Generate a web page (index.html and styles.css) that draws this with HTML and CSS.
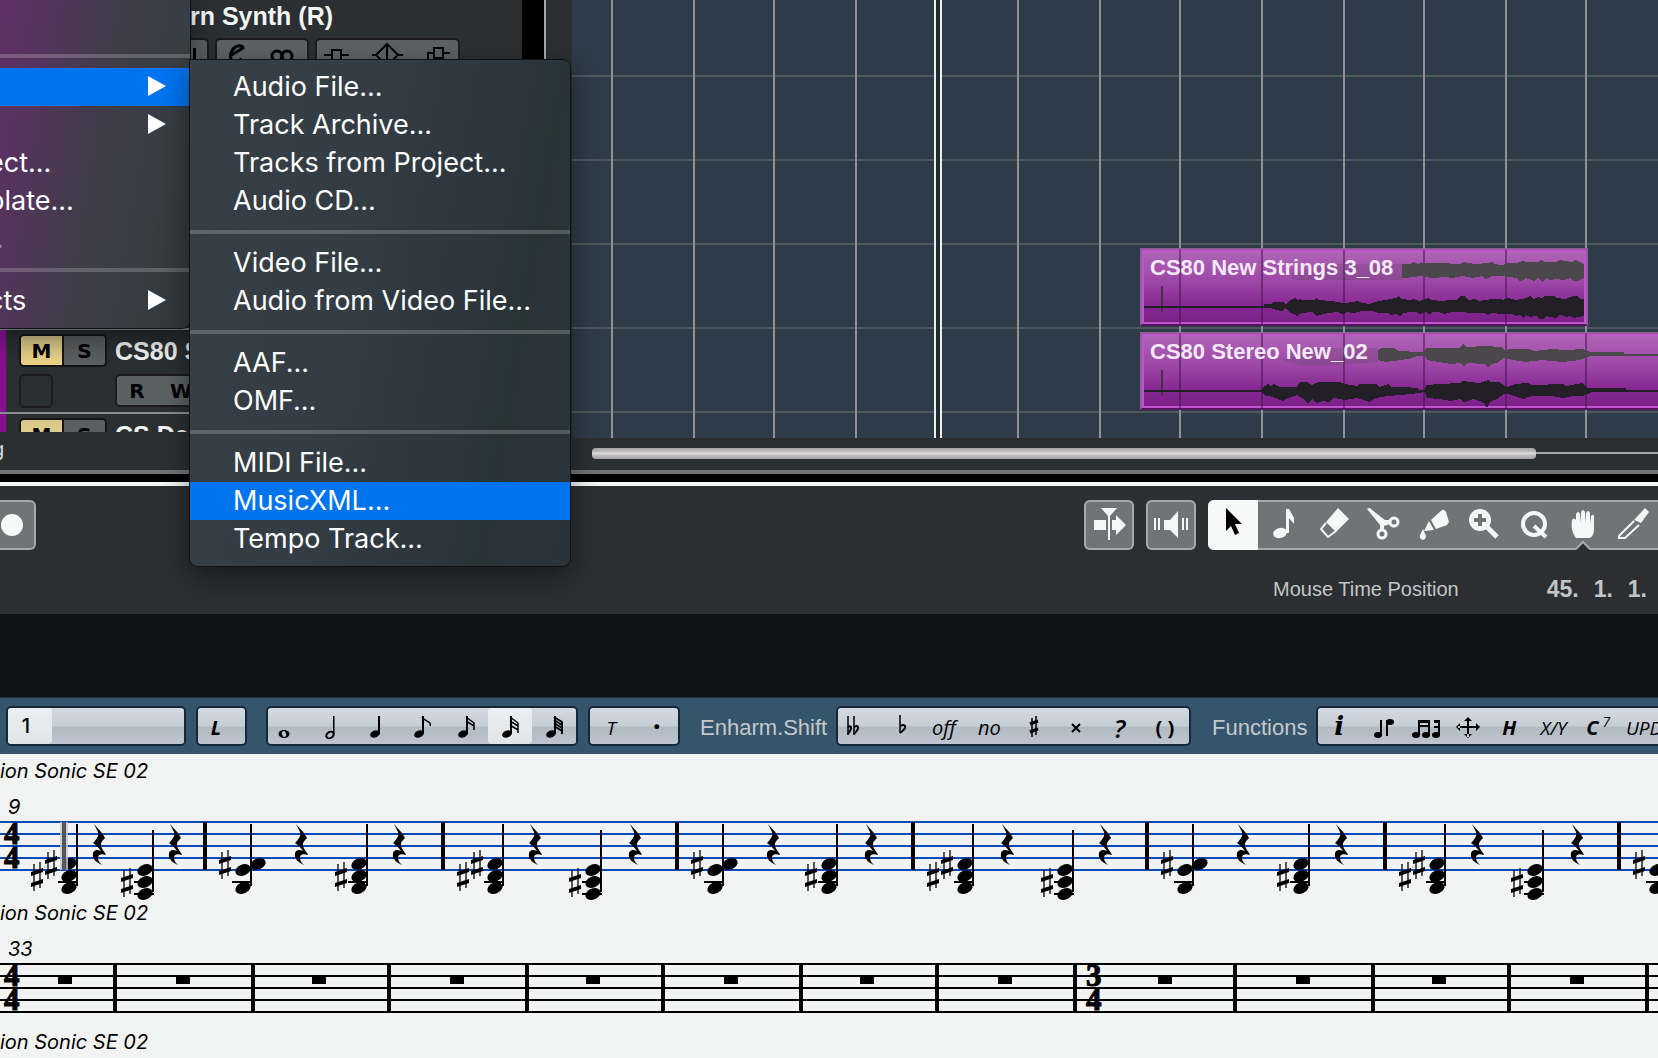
FILE: index.html
```html
<!DOCTYPE html>
<html lang="en">
<head>
  <meta charset="UTF-8" />
  <meta name="viewport" content="width=device-width, initial-scale=1.0" />
  <title>Project</title>
  <link rel="stylesheet" href="styles.css">
</head>
<body>

  <!-- shared symbols -->
  <svg class="defs" width="0" height="0" aria-hidden="true">
    <g id="n"><ellipse rx="8" ry="5.5" transform="rotate(-24)" /></g>
    <g id="sharp">
      <path d="M-3-12v27M3-14v26" stroke="#000" stroke-width="1.3" />
      <path d="M-6-4L6-8v4L-6 0zM-6 7L6 3v4L-6 11z" />
    </g>
    <g id="rest">
      <path d="M-4-20C1-14 4-12 7-6C2-1 1 1 7 9L8 11C2 9 0 11 0 14C0 17 2 19 4 21C-3 18-6 14-5 9C-4 6-1 5 3 7C0 3-2 1-5-1C0-6 1-9 0-12z" />
    </g>
    <g id="chord-d">
      <use href="#n" x="-7" y="43" /><use href="#n" x="-7" y="55" /><use href="#n" x="-7" y="67" />
      <path d="M0 3h2v62h-2zM-18 60h20v2h-20z" />
      <use href="#sharp" x="-25" y="55" />
    </g>
    <g id="chord-two">
      <use href="#n" x="-7" y="43" /><use href="#n" x="-7" y="55" /><use href="#n" x="-7" y="67" />
      <path d="M0 3h2v62h-2zM-18 60h20v2h-20z" />
      <use href="#sharp" x="-39" y="55" />
      <use href="#sharp" x="-25" y="43" />
    </g>
    <g id="chord-b">
      <use href="#n" x="-7" y="49" /><use href="#n" x="-7" y="61" /><use href="#n" x="-7" y="73" />
      <path d="M0 9h2v62h-2zM-18 60h20v2h-20zM-18 72h20v2h-20z" />
      <use href="#sharp" x="-25" y="61" />
    </g>
    <g id="chord-c">
      <use href="#n" x="-7" y="49" /><use href="#n" x="8" y="43" /><use href="#n" x="-7" y="67" />
      <path d="M0 3h2v62h-2zM-18 60h20v2h-20z" />
      <use href="#sharp" x="-25" y="43" />
    </g>
    <g id="stem">
      <ellipse cx="9" cy="22" rx="5" ry="3.5" transform="rotate(-20 9 22)" />
      <path d="M12 4h2v18h-2z" />
    </g>
  </svg>

  <section class="project">
    <div class="tracks">
      <div class="track-list">
        <div class="track track-first">
          <span class="track-name">rn Synth (R)</span>
          <div class="track-row">
            <button class="tbtn-group edge" aria-label="Write"><svg width="8" height="30"><path d="M3 8h3v16h-6v-3h3z"/></svg></button>
            <button class="tbtn-group" aria-label="Edit channel">
              <svg width="86" height="30"><path d="M11 16L24 8C24 5 15 4 12 13C10 20 14 24 23 19" fill="none" stroke="#000" stroke-width="3"/><g fill="none" stroke="#000" stroke-width="3"><circle cx="58" cy="16" r="5"/><circle cx="68" cy="16" r="5"/></g></svg>
            </button>
            <button class="tbtn-group" aria-label="Inserts">
              <svg width="137" height="30" fill="none" stroke="#000" stroke-width="2"><path d="M5 15h8M22 15h8M13 10h9v10h-9zM53 15h4l11-11 11 11h5M57 15l11 11 11-11M68 4v22M109 24v-11h6M115 8h9v10h-9zM124 13h7"/></svg>
            </button>
          </div>
        </div>
        <div class="track">
          <div class="track-row">
            <div class="ms"><button class="mute">M</button><button>S</button></div>
            <span class="track-name">CS80 Stereo</span>
          </div>
          <div class="track-row">
            <button class="rec-box" aria-label="Record enable"></button>
            <div class="rw"><button>R</button><button>W</button></div>
          </div>
        </div>
        <div class="track">
          <div class="track-row">
            <div class="ms"><button class="mute">M</button><button>S</button></div>
            <span class="track-name">CS Deep</span>
          </div>
        </div>
      </div>
      <div class="track-foot">g</div>
      <div class="track-split"></div>
    </div>

    <div class="arrange">
      <div class="canvas">
        <svg class="grid-lines" width="100%" height="100%" shape-rendering="crispEdges">
          <path d="M40 0v438M122 0v438M202 0v438M284 0v438M446 0v438M528 0v438M608 0v438M690 0v438M772 0v438M852 0v438M934 0v438M1014 0v438" stroke="#8f9192" stroke-width="2" />
          <path d="M362 0h8v438h-8z" fill="#252c30" />
          <path d="M363 0v438M369 0v438" stroke="#eceeed" stroke-width="2" />
        </svg>

        <div class="clip clip-strings">
          <svg class="wave" width="100%" height="100%" shape-rendering="crispEdges">
            <path d="M38 0v74M120 0v74M202 0v74M282 0v74M364 0v74" stroke="#3c1442" stroke-opacity=".5" stroke-width="2" />
            <path d="M20 36v26" stroke="#473049" stroke-width="2" />
            <path fill="#4b484c" fill-opacity=".2" d="M150 24L180 14H260V30H150z" />
            <path fill="#4b484c" d="M260 14L268 14 272 12 276 14 278 13 298 13 318 14 322 12 326 13 334 14 346 13 350 12 352 14 360 15 366 13 374 13 380 11 386 12 396 12 399 10 403 12 414 12 418 10 430 12 434 10 438 12 442 14V28L436 31 432 31 428 28 422 30 414 29 408 30 404 28 400 32 396 28 392 31 384 28 381 30 378 31 374 28 360 26 350 26 344 29 340 26 330 28 320 26 310 28 304 27 290 28 278 26 272 27 262 28H260z" />
            <path fill="#231f26" d="M2 56H122V54L129 54 131 52 141 52 144 54 146 52 149 50 153 48 156 50 158 49 160 50 172 50 174 48 176 50 190 51 201 53 203 53 210 52 216 51 220 53 228 54 236 51 244 50 248 49 254 48 257 46 259 49 268 50 272 49 277 51 280 50 286 48 290 50 300 51 308 50 314 50 318 46 323 46 326 50 333 49 337 51 343 50 350 49 359 49 361 50 366 48 374 50 380 49 384 48 388 46 392 49 396 47 400 48 402 46 412 46 414 48 424 49 428 47 431 46 436 46 438 49 442 49V66L436 67 432 68 428 66 424 67 418 65 414 68 408 67 404 66 402 69 398 69 394 66 388 67 384 65 381 68 378 65 374 66 370 64 360 64 350 63 346 65 342 63 330 63 318 62 310 62 302 64 296 62 290 62 288 65 284 62 278 64 274 62 268 62 262 63 258 66 254 64 249 65 246 63 236 63 230 61 220 61 212 63 204 62 202 65 196 62 186 63 178 65 174 66 170 62 160 63 155 66 152 64 148 63 144 58 140 61 134 60 128 58H2z" />
          </svg>
          <span class="clip-name">CS80 New Strings 3_08</span>
        </div>

        <div class="clip clip-stereo">
          <svg class="wave" width="100%" height="100%" shape-rendering="crispEdges">
            <path d="M38 0v74M120 0v74M202 0v74M282 0v74M364 0v74M444 0v74" stroke="#3c1442" stroke-opacity=".5" stroke-width="2" />
            <path d="M20 36v26" stroke="#473049" stroke-width="2" />
            <path fill="#4b484c" fill-opacity=".2" d="M140 26L160 14H236V28L175 32 160 32z" />
            <path fill="#4b484c" d="M236 16L240 14 252 14 257 17 276 18 282 18 284 14 318 14 321 10 325 13 342 12 359 13 364 17 367 15 386 15 393 17 410 15 424 16 441 15 448 18 482 18 482 20 620 20V22H448L438 26 421 28 400 26 383 28 366 25 362 24 355 29 349 30 346 33 342 30 325 29 322 33 318 29 309 30 285 26 283 22 276 22 266 25 244 28 236 26z" />
            <path fill="#231f26" d="M2 56H119L120 54 126 50 129 52 132 50 138 53 155 53 158 48 165 48 170 51 177 48 198 48 203 50 215 52 218 50 234 50 237 53 246 50 249 53 263 53 275 54 277 56 283 56 284 51 297 50 318 49 321 47 337 49 346 46 349 48 357 48 363 52 366 53 373 50 386 49 390 51 421 50 424 52 441 49 445 54 484 54 484 56 620 56V58H450L441 62 431 62 421 64 410 62 390 62 381 65 367 60 362 60 355 65 348 68 345 74 342 69 338 67 331 65 322 68 318 65 309 67 297 65 285 64 283 58 277 59 259 61 246 62 234 64 227 68 215 64 203 66 192 64 187 68 180 67 175 69 170 65 166 70 160 64 155 61 146 64 141 67 131 63 122 61 120 58H2z" />
          </svg>
          <span class="clip-name">CS80 Stereo New_02</span>
        </div>
      </div>
      <div class="hscroll"><div class="thumb"></div><div class="rail"></div></div>
    </div>
  </section>

  <section class="transport">
    <div class="transport-row">
      <button class="record" aria-label="Record"><span></span></button>
      <div class="tools">
        <button class="tool single" aria-label="Auto scroll">
          <svg width="50" height="50" fill="#f5f7f7"><path d="M10 20h12v10h-12zM28 20h4v-5l10 10-10 10v-5h-4zM17 8h16l-7 8v24h-2v-24z"/></svg>
        </button>
        <button class="tool single" aria-label="Acoustic feedback">
          <svg width="50" height="50" fill="#f5f7f7"><path d="M8 18h2v12h-2zM12 18h2v12h-2zM18 20h6l8-9v27l-8-8h-6zM36 18h2v12h-2zM40 18h2v12h-2z"/></svg>
        </button>
        <div class="toolbox">
          <button class="tool active" aria-label="Select"><svg width="50" height="50"><path d="M18 8v23l5-5 4 9 4-2-4-9h7z"/></svg></button>
          <button class="tool" aria-label="Insert note"><svg width="50" height="50" fill="#f5f7f7"><ellipse cx="22" cy="33" rx="7" ry="5" transform="rotate(-15 22 33)"/><path d="M28 9h3l5 9v6l-5-6v15h-3z"/></svg></button>
          <button class="tool" aria-label="Erase"><svg width="50" height="50" fill="#f5f7f7"><path d="M30 8L41 19L28 32L18 22z"/><path d="M18 23L13 29L20 37L28 31" fill="none" stroke="#f5f7f7" stroke-width="2"/></svg></button>
          <button class="tool" aria-label="Split"><svg width="50" height="50" fill="#f5f7f7"><path d="M9 9C11 7 13 8 14 10L27 20L32 20V24L26 26V30H22V25z"/><g fill="none" stroke="#f5f7f7" stroke-width="3"><circle cx="36" cy="22" r="4"/><circle cx="24" cy="34" r="4"/></g></svg></button>
          <button class="tool" aria-label="Glue"><svg width="50" height="50" fill="#f5f7f7"><path d="M34 10Q36 9 38 12L41 22L39 25L28 29L23 20zM21 21L26 30L16 31zM15 29L18 36Q18 39 15 40Q11 39 12 35z"/></svg></button>
          <button class="tool" aria-label="Zoom"><svg width="50" height="50"><circle cx="22" cy="20" r="11" fill="#f5f7f7"/><path d="M29 27l10 10" stroke="#f5f7f7" stroke-width="5"/><path d="M20 14h4v4h4v4h-4v4h-4v-4h-4v-4h4z" fill="#707477"/></svg></button>
          <button class="tool" aria-label="Quantize"><svg width="50" height="50" fill="none" stroke="#f5f7f7" stroke-width="4"><ellipse cx="26" cy="24" rx="11" ry="11"/><path d="M26 26l12 11"/></svg></button>
          <button class="tool" aria-label="Hand"><svg width="50" height="50"><path d="M18 38C14 33 13 27 14 20Q16 17 18 20V26L18 14Q20 10 22 14L23 23V12Q25 8 27 12V23L28 13Q30 9 32 13V24L33 16Q36 13 36 17V30Q36 35 32 38z" fill="#f5f7f7"/><path d="M18 50L25 42L32 50z" fill="#2b2f32"/><path d="M18 49L25 42L32 49" fill="none" stroke="#a6a9ab" stroke-width="2"/></svg></button>
          <button class="tool" aria-label="Cut notes"><svg width="50" height="50" fill="#f5f7f7"><path d="M37 8L41 12L33 23L26 20z"/><path d="M26 21L11 36V38H17L31 25" fill="none" stroke="#f5f7f7" stroke-width="2"/></svg></button>
        </div>
      </div>
    </div>
    <div class="mouse-row">
      <span class="mouse-label">Mouse Time Position</span>
      <span class="mouse-value"><b>45.</b><b>1.</b><b>1.</b></span>
    </div>
  </section>

  <div class="gap-strip"></div>

  <nav class="score-bar">
    <div class="keys voice"><button class="key on">1</button></div>
    <div class="keys lock"><button class="key text"><i>L</i></button></div>
    <div class="keys lengths">
      <button class="key" aria-label="Whole"><svg width="24" height="28"><ellipse cx="6" cy="22" rx="5.5" ry="4"/><ellipse cx="6" cy="22" rx="2" ry="3" fill="#bcc3ca" transform="rotate(-20 6 22)"/></svg></button>
      <button class="key" aria-label="Half"><svg width="24" height="28"><ellipse cx="8" cy="23" rx="4" ry="3" fill="none" stroke="#000" stroke-width="2" transform="rotate(-35 8 23)"/><path d="M11 4h1.500v18h-1.500z"/></svg></button>
      <button class="key" aria-label="Quarter"><svg width="24" height="28"><use href="#stem"/></svg></button>
      <button class="key" aria-label="Eighth"><svg width="24" height="28"><use href="#stem"/><path d="M12 5C15 10 22 9 20 14" fill="none" stroke="#000" stroke-width="1.500"/></svg></button>
      <button class="key" aria-label="Sixteenth"><svg width="24" height="28"><use href="#stem"/><path d="M12 5L20 11V14M12 9L20 14V18" fill="none" stroke="#000" stroke-width="1.500"/></svg></button>
      <button class="key on" aria-label="Thirty-second"><svg width="24" height="28"><use href="#stem"/><path d="M12 5L20 11V14M12 9L20 14V18M12 13L20 18V21" fill="none" stroke="#000" stroke-width="1.500"/></svg></button>
      <button class="key" aria-label="Sixty-fourth"><svg width="24" height="28"><use href="#stem"/><path d="M12 5L20 10V13M12 8L20 13V16M12 11L20 16V19M12 14L20 19V22" fill="none" stroke="#000" stroke-width="2"/></svg></button>
    </div>
    <div class="keys tuplet">
      <button class="key small text"><i>T</i></button>
      <button class="key dot" aria-label="Dotted">·</button>
    </div>
    <span class="bar-label">Enharm.Shift</span>
    <div class="keys enharm">
      <button class="key" aria-label="Double flat"><svg width="24" height="28" fill="none" stroke="#000"><path d="M1 4v19M7 4v19" stroke-width="1.500"/><path d="M1 15C4 13 6 15 1 22M7 15C13 12 12 17 7 22" stroke-width="2"/></svg></button>
      <button class="key" aria-label="Flat"><svg width="24" height="28" fill="none" stroke="#000"><path d="M10 3v18" stroke-width="1.500"/><path d="M10 14C17 11 17 16 10 21" stroke-width="2"/></svg></button>
      <button class="key text"><i>off</i></button>
      <button class="key text"><i>no</i></button>
      <button class="key" aria-label="Sharp"><svg width="24" height="28" fill="none" stroke="#000"><path d="M9 6v19M13 4v19" stroke-width="1.500"/><path d="M7 12l8-3M7 20l8-3" stroke-width="3"/></svg></button>
      <button class="key" aria-label="Double sharp"><svg width="24" height="28" fill="none" stroke="#000" stroke-width="2"><path d="M7 12l8 8M15 12l-8 8"/></svg></button>
      <button class="key big text"><i>?</i></button>
      <button class="key text"><b>( )</b></button>
    </div>
    <span class="bar-label functions-label">Functions</span>
    <div class="keys functions">
      <button class="key info"><i>i</i></button>
      <button class="key" aria-label="Flip"><svg width="24" height="28"><ellipse cx="5" cy="23" rx="4" ry="3"/><path d="M7 8h2v15h-2zM13 8h2v16h-2z"/><ellipse cx="17" cy="10" rx="4" ry="3"/></svg></button>
      <button class="key" aria-label="Group"><svg width="30" height="28"><ellipse cx="5" cy="23" rx="4" ry="3"/><ellipse cx="15" cy="23" rx="4" ry="3"/><ellipse cx="25" cy="23" rx="4" ry="3"/><path d="M7 8h2v15h-2zM17 8h2v15h-2zM27 8h2v15h-2zM7 8h12v3h-12zM9 13h9v2h-9zM23 8h6v3h-6zM23 14h6v2h-6z"/></svg></button>
      <button class="key" aria-label="Auto layout"><svg width="24" height="28"><path d="M11 7h2v18h-2zM2 14h20v2h-20zM8 9l4-4 4 4zM8 22l4 4 4-4zM4 11l-4 4 4 4zM20 11l4 4-4 4z"/></svg></button>
      <button class="key text"><b><i>H</i></b></button>
      <button class="key small text"><i>X/Y</i></button>
      <button class="key text"><i><b>C</b><sup>7</sup></i></button>
      <button class="key small text upd"><i>UPD</i></button>
    </div>
  </nav>

  <main class="score">
    <section class="system">
      <h2>ion Sonic SE 02</h2>
      <p class="measure">9</p>
      <svg class="staff" width="100%" height="79">
        <path class="staff-lines blue" d="M0 1H4000M0 13H4000M0 25H4000M0 37H4000M0 49H4000" />
        <g class="time"><text x="4" y="23">4</text><text x="4" y="47">4</text></g>
        <path d="M203 1h4v48h-4zM441 1h4v48h-4zM675 1h4v48h-4zM911 1h4v48h-4zM1145 1h4v48h-4zM1383 1h4v48h-4zM1617 1h4v48h-4z" />
        <use href="#chord-two" x="76" /><use href="#rest" x="98" y="23" />
        <use href="#chord-b" x="152" /><use href="#rest" x="174" y="23" />
        <use href="#chord-c" x="250" /><use href="#rest" x="300" y="23" />
        <use href="#chord-d" x="366" /><use href="#rest" x="398" y="23" />
        <use href="#chord-two" x="502" /><use href="#rest" x="534" y="23" />
        <use href="#chord-b" x="600" /><use href="#rest" x="634" y="23" />
        <use href="#chord-c" x="722" /><use href="#rest" x="772" y="23" />
        <use href="#chord-d" x="836" /><use href="#rest" x="870" y="23" />
        <use href="#chord-two" x="972" /><use href="#rest" x="1006" y="23" />
        <use href="#chord-b" x="1072" /><use href="#rest" x="1104" y="23" />
        <use href="#chord-c" x="1192" /><use href="#rest" x="1242" y="23" />
        <use href="#chord-d" x="1308" /><use href="#rest" x="1340" y="23" />
        <use href="#chord-two" x="1444" /><use href="#rest" x="1476" y="23" />
        <use href="#chord-b" x="1542" /><use href="#rest" x="1576" y="23" />
        <use href="#chord-c" x="1664" />
        <path d="M60 1h8v48h-8z" fill="#c9cbcc" fill-opacity=".8" /><path d="M62 1h4v48h-4z" fill="#55565c" />
      </svg>
    </section>

    <section class="system">
      <h2>ion Sonic SE 02</h2>
      <p class="measure">33</p>
      <svg class="staff" width="100%" height="66">
        <path class="staff-lines" d="M0 1H4000M0 13H4000M0 25H4000M0 37H4000M0 49H4000" />
        <g class="time"><text x="4" y="23">4</text><text x="4" y="47">4</text><text x="1086" y="23">3</text><text x="1086" y="47">4</text></g>
        <path d="M113 1h4v48h-4zM251 1h4v48h-4zM387 1h4v48h-4zM525 1h4v48h-4zM661 1h4v48h-4zM799 1h4v48h-4zM935 1h4v48h-4zM1073 1h4v48h-4zM1233 1h4v48h-4zM1371 1h4v48h-4zM1507 1h4v48h-4zM1645 1h4v48h-4z" />
        <path d="M58 13h14v8h-14zM176 13h14v8h-14zM312 13h14v8h-14zM450 13h14v8h-14zM586 13h14v8h-14zM724 13h14v8h-14zM860 13h14v8h-14zM998 13h14v8h-14zM1158 13h14v8h-14zM1296 13h14v8h-14zM1432 13h14v8h-14zM1570 13h14v8h-14z" />
      </svg>
    </section>

    <section class="system">
      <h2>ion Sonic SE 02</h2>
    </section>
  </main>

  <!-- open File menu -->
  <ul class="menu file-menu">
    <li class="sep"></li>
    <li class="selected"><button aria-label="Import"><span class="arrow"></span></button></li>
    <li><button aria-label="Export"><span class="arrow"></span></button></li>
    <li><button>ect...</button></li>
    <li><button>plate...</button></li>
    <li class="disabled"><button disabled>..</button></li>
    <li class="sep"></li>
    <li><button>cts<span class="arrow"></span></button></li>
  </ul>

  <ul class="menu import-menu">
    <li><button>Audio File...</button></li>
    <li><button>Track Archive...</button></li>
    <li><button>Tracks from Project...</button></li>
    <li><button>Audio CD...</button></li>
    <li class="sep"></li>
    <li><button>Video File...</button></li>
    <li><button>Audio from Video File...</button></li>
    <li class="sep"></li>
    <li><button>AAF...</button></li>
    <li><button>OMF...</button></li>
    <li class="sep"></li>
    <li><button>MIDI File...</button></li>
    <li class="selected"><button>MusicXML...</button></li>
    <li><button>Tempo Track...</button></li>
  </ul>

</body>
</html>
```
FILE: styles.css
```css
* {
  box-sizing: border-box;
}

body {
  margin: 0;
  min-height: 100vh;
  display: flex;
  flex-direction: column;
  position: relative;
  overflow: hidden;
  background: #121315;
  font-family: "Liberation Sans", Arial, sans-serif;
}

button {
  margin: 0;
  padding: 0;
  border: none;
  background: none;
  font: inherit;
  color: inherit;
}

svg {
  display: block;
}

.defs {
  position: absolute;
}

/* project window */
.project {
  display: flex;
  background: #2b2f32;
  border-bottom: 4px solid #f4f6f5;
  box-shadow: inset 0 -8px #000, inset 0 -12px #717375;
}

.tracks {
  width: 572px;
  flex: none;
  display: grid;
  grid-template-columns: 1fr 50px;
  grid-template-rows: 432px 38px;
  margin-bottom: 12px;
}

.track-list {
  overflow: hidden;
}

.track-split {
  grid-column: 2;
  grid-row: 1 / 3;
  border-left: 22px solid #000;
  box-shadow: inset 2px 0 #a4a6a7;
}

.track {
  height: 84px;
  padding: 4px 0 0 19px;
  border-bottom: 2px solid #8b8e8f;
  box-shadow: inset 6px 0 #86108f;
}

.track-first {
  height: 330px;
  padding: 2px 0 0 190px;
}

.track-name {
  font-size: 25px;
  line-height: 34px;
  font-weight: bold;
  color: #f2f3f3;
  white-space: nowrap;
}

.track-row {
  display: flex;
  gap: 8px;
  margin-bottom: 6px;
}

.track-first .track-name {
  line-height: 28px;
}

.track-first .track-row {
  gap: 6px;
  margin-top: 8px;
}

.tbtn-group {
  padding: 0 2px;
  height: 32px;
  border: 2px solid #1d1b1f;
  border-radius: 5px;
  background: #5c6164;
}

.tbtn-group.edge {
  width: 19px;
  padding: 0;
  border-left: none;
  border-radius: 0 5px 5px 0;
}

.ms {
  width: 88px;
  height: 33px;
  display: flex;
  border: 2px solid #131517;
  border-radius: 5px;
  overflow: hidden;
}

.ms button {
  flex: 1;
  background: #5b5f62;
  font: bold 20px "DejaVu Sans", sans-serif;
  color: #000;
}

.ms .mute {
  background: linear-gradient(#d8c78c, #ecd584);
  border-right: 2px solid #131517;
}

.rec-box {
  width: 34px;
  height: 34px;
  border: 2px solid #1f1b20;
  border-radius: 5px;
}

.rw {
  width: 140px;
  height: 33px;
  margin-left: 54px;
  display: flex;
  border: 2px solid #1d1b1f;
  border-radius: 5px;
  background: #5b6063;
}

.rw button {
  width: 44px;
  padding-right: 4px;
  font: bold 20px "DejaVu Sans", sans-serif;
  color: #000;
}

.track-foot {
  color: #d8d8d8;
  font-size: 20px;
  line-height: 34px;
  text-indent: -7px;
}

/* arrangement */
.arrange {
  flex: 1;
  min-width: 0;
}

.canvas {
  position: relative;
  height: 438px;
  overflow: hidden;
  background: repeating-linear-gradient(transparent 0 75px, #4e575e 75px 77px, transparent 77px 84px) #2e3b48;
}

.clip {
  position: absolute;
  left: 568px;
  height: 78px;
  padding: 4px 8px;
  border: 2px solid #955a9c;
  border-bottom-color: #561160;
  box-shadow: inset 0 0 0 2px #bf55cb;
  background: linear-gradient(#af65b8, #9c45a6 45%, #852792 75%, #7c2088);
}

.clip-strings {
  top: 248px;
  width: 448px;
}

.clip-stereo {
  top: 332px;
  width: 600px;
}

.wave {
  position: absolute;
  inset: 0;
}

.clip-name {
  position: relative;
  font-size: 22px;
  line-height: 28px;
  font-weight: bold;
  color: #f3e8f5;
  white-space: nowrap;
}

.hscroll {
  display: flex;
  align-items: center;
  height: 32px;
  padding: 0 0 2px 20px;
}

.thumb {
  flex: 0 1 944px;
  height: 11px;
  border-radius: 4px;
  background: linear-gradient(#a5a3a3, #bcbaba 30%, #dddbdb 50%, #bcbaba 70%, #a5a3a3);
}

.rail {
  flex: 1;
  height: 2px;
  background: #a9abab;
}

/* transport */
.transport {
  height: 128px;
  padding-top: 14px;
  background: #2b2f32;
}

.transport-row {
  display: flex;
  justify-content: space-between;
}

.record {
  width: 36px;
  height: 50px;
  border: 2px solid #a6a9ab;
  border-left: none;
  border-radius: 0 6px 6px 0;
  background: #707477;
}

.record span {
  display: block;
  width: 22px;
  height: 22px;
  margin-left: 1px;
  border-radius: 50%;
  background: #f7f9f9;
}

.tools {
  display: flex;
  gap: 12px;
}

.tool {
  width: 50px;
  height: 50px;
}

.single {
  border-radius: 6px;
  background: #707477;
  box-shadow: inset 0 0 0 2px #a6a9ab;
}

.toolbox {
  display: flex;
  border-radius: 6px 0 0 6px;
  overflow: hidden;
  background: #707477;
  box-shadow: inset 0 2px #a6a9ab, inset 0 -2px #a6a9ab;
}

.active {
  background: #f7f9f9;
}

.mouse-row {
  display: flex;
  justify-content: flex-end;
  align-items: center;
  gap: 88px;
  height: 28px;
  margin-top: 25px;
  padding-right: 11px;
  font-size: 20px;
  color: #c3c5c6;
}

.mouse-value {
  display: flex;
  gap: 15px;
  font-size: 23px;
}

.gap-strip {
  height: 84px;
  border-bottom: 1px solid #1c2e3b;
}

/* score toolbar */
.score-bar {
  display: flex;
  align-items: center;
  height: 56px;
  padding-left: 6px;
  background: #35556c;
  overflow: hidden;
  color: #000;
}

.keys {
  display: flex;
  flex: none;
  height: 40px;
  border: 2px solid #142838;
  border-radius: 5px;
  background: linear-gradient(#d3d9df, #c6cdd4 50%, #b2bac2 54%, #bfc5ce);
}

.voice {
  width: 180px;
  margin-right: 10px;
}

.voice .key {
  flex: none;
  width: 44px;
  font-family: Inter, sans-serif;
  font-size: 20px;
  padding-right: 8px;
}

.lock {
  width: 51px;
  margin-right: 19px;
  padding-right: 8px;
  font-weight: bold;
}

.lengths {
  width: 312px;
  margin-right: 10px;
}

.tuplet {
  width: 92px;
  margin-right: 20px;
}

.bar-label {
  width: 126px;
  padding-top: 4px;
  font-size: 22px;
  color: #c6c8ca;
  white-space: nowrap;
}

.enharm {
  width: 355px;
  margin-left: 10px;
}

.functions-label {
  width: 97px;
  margin-left: 21px;
}

.functions {
  width: 364px;
  margin-left: 9px;
  padding-right: 8px;
}

.key {
  flex: 1 0 0;
  min-width: 0;
  display: flex;
  align-items: center;
  justify-content: center;
  font-family: "Open Sans", sans-serif;
  font-size: 20px;
  font-weight: 500;
  white-space: nowrap;
}

.key.text {
  padding: 3px 3px 0 0;
}

.lock .key {
  font-weight: bold;
}

.key.on {
  border-radius: 4px;
  background: linear-gradient(#ebeff1, #e3e4e8);
}

.key.small {
  font-size: 19px;
}

.key.big {
  font-size: 26px;
  font-weight: 600;
}

.key.dot {
  font-size: 28px;
  font-weight: bold;
}

.key.info {
  padding-right: 4px;
  font: bold 26px "DejaVu Serif", serif;
}

.key.upd {
  justify-content: flex-start;
  padding-left: 4px;
}

.key sup {
  font-size: 14px;
  line-height: 14px;
  margin-left: 4px;
}

/* score page */
.score {
  flex: 1;
  padding-top: 4px;
  background: #f2f4f3;
  overflow: hidden;
}

.system h2,
.measure {
  margin: 0;
  font: italic 400 20px Inter, sans-serif;
  color: #000;
}

.system h2 {
  line-height: 27px;
}

.measure {
  padding: 9px 0 0 8px;
  line-height: 27px;
}

.staff {
  overflow: visible;
}

.staff-lines {
  stroke: #000;
  stroke-width: 2px;
}

.staff-lines.blue {
  stroke: #0a49b9;
}

.time {
  font: bold 31px "Liberation Serif", serif;
  stroke: #000;
  stroke-width: 1px;
}

/* menus */
.menu {
  position: absolute;
  margin: 0;
  list-style: none;
  font-family: Inter, sans-serif;
  font-size: 27px;
  color: #fff;
  box-shadow: 0 0 0 1px #101214, 0 10px 28px rgba(0, 0, 0, 0.45);
}

.menu button {
  display: flex;
  align-items: center;
  width: 100%;
  height: 38px;
  padding-bottom: 2px;
  white-space: nowrap;
}

.menu .sep {
  height: 24px;
  padding: 10px 0;
  background: rgba(255, 255, 255, 0.2) content-box;
}

.menu .selected {
  background: #0073ee;
}

.file-menu {
  top: 0;
  left: 0;
  width: 190px;
  padding: 44px 0 8px;
  border-radius: 0 0 8px 0;
  background: linear-gradient(100deg, #603067, #55345e 18%, #403c49 48%, #373e44 75%, #30373b);
}

.file-menu button {
  padding-right: 24px;
  text-indent: -12px;
}

.file-menu .disabled {
  color: #a18fa8;
}

.arrow {
  margin-left: auto;
  border-left: 18px solid #fff;
  border-top: 10px solid transparent;
  border-bottom: 10px solid transparent;
}

.import-menu {
  top: 60px;
  left: 190px;
  width: 380px;
  padding: 8px 0;
  border-radius: 0 8px 8px 8px;
  background: linear-gradient(100deg, #373f46, #343c44 40%, #293439 80%, #2b3339);
}

.import-menu button {
  padding-left: 43px;
}
```
